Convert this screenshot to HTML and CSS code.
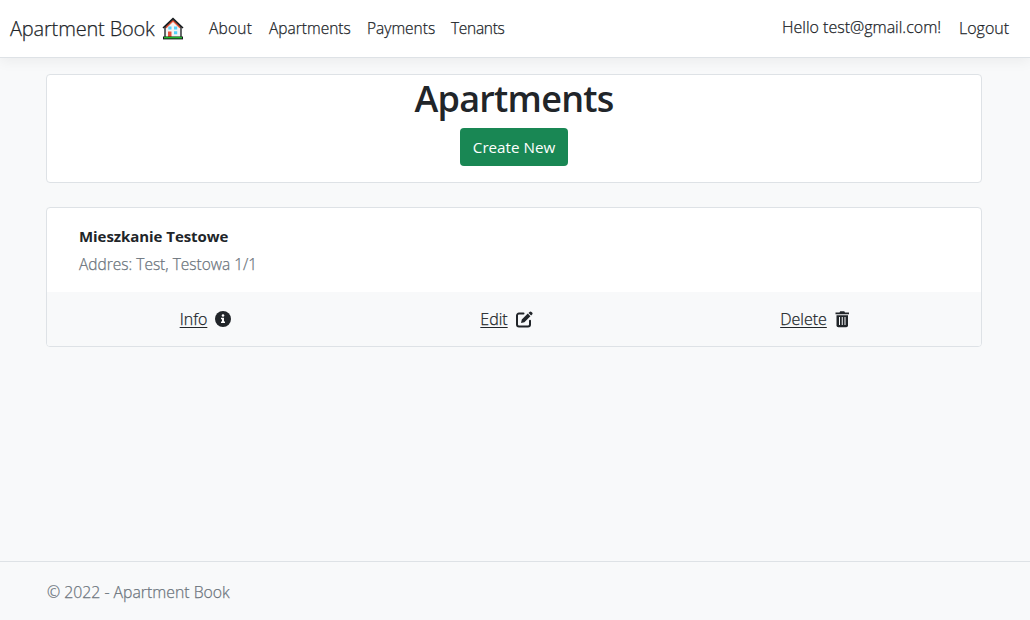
FILE: index.html
```html
<!DOCTYPE html>
<html lang="en">
<head>
<meta charset="utf-8">
<title>Apartments - Apartment Book</title>
<link rel="stylesheet" href="styles.css">
</head>
<body>
<header class="navbar">
  <a class="brand" href="#"><span class="brand-name">Apartment Book</span>
    <svg class="house" viewBox="0 0 22 23" width="22" height="23">
      <path d="M3 10.500 11 3 19 10.500V21H3Z" fill="#f3f3f3" stroke="#16191c" stroke-width="1.3"/>
      <path d="M4 10.800 11 4 18 10.800" fill="none" stroke="#f05a3c" stroke-width="1.3"/>
      <path d="M1 11 11 1.500 21 11" fill="none" stroke="#16191c" stroke-width="1.5"/>
      <path d="M6.300 9.500h3.200v3H6.300zM12 9.500h3.200v3H12zM12 14.300h3.200v3H12z" fill="#55d0f8"/>
      <path d="M6 14.500h3.500V20H6z" fill="#e9503b"/>
      <path d="M1 19.500h20v2.900H1z" fill="#16191c"/>
      <path d="M2 19.800h18v1.600H2z" fill="#20b82c"/>
    </svg>
  </a>
  <nav class="links">
    <a class="nav-link about" href="#">About</a>
    <a class="nav-link apartments" href="#">Apartments</a>
    <a class="nav-link payments" href="#">Payments</a>
    <a class="nav-link tenants" href="#">Tenants</a>
  </nav>
  <div class="account">
    <a class="hello" href="#">Hello test@gmail.com!</a>
    <a class="logout" href="#">Logout</a>
  </div>
</header>
<main class="container">
  <section class="card heading">
    <h1 class="title">Apartments</h1>
    <a class="btn" href="#">Create New</a>
  </section>
  <section class="card">
    <div class="card-body">
      <h2 class="name">Mieszkanie Testowe</h2>
      <p class="address">Addres: Test, Testowa 1/1</p>
    </div>
    <div class="actions">
      <div class="action"><a class="action-link info" href="#">Info</a>
        <svg width="16" height="16" viewBox="0 0 16 16"><circle cx="8" cy="8" r="8" fill="#212529"/><circle cx="8" cy="4.5" r="1.3" fill="#fff"/><path d="M6 6.800h3v3.800h1V12H6v-1.400h1V8.200H6z" fill="#fff"/></svg>
      </div>
      <div class="action"><a class="action-link edit" href="#">Edit</a>
        <svg width="17" height="17" viewBox="0 0 17 17"><path d="M7.500 2.500H3A2 2 0 0 0 1 4.500V13.500A2 2 0 0 0 3 15.500H12A2 2 0 0 0 14 13.500V9.800" fill="none" stroke="#212529" stroke-width="2" stroke-linecap="round"/><path d="M5 12l.8-3.400L11.800 2.600l2.600 2.600L8.400 11.200ZM12.500 1.900l1-1a1.400 1.400 0 0 1 2 0l.6.6a1.400 1.400 0 0 1 0 2l-1 1z" fill="#212529"/></svg>
      </div>
      <div class="action"><a class="action-link delete" href="#">Delete</a>
        <svg width="15" height="17" viewBox="0 0 15 17"><path d="M.5 1.500H4.500L5.200.3H9.300L10 1.500H14V3.300H.5Z" fill="#212529"/><path d="M1.500 4.300H13V14.500A1.800 1.800 0 0 1 11.200 16.300H3.300A1.800 1.800 0 0 1 1.500 14.500Z" fill="#212529"/><path d="M4.500 6V14M7.250 6V14M10 6V14" stroke="#f8f9fa" stroke-width="1"/></svg>
      </div>
    </div>
  </section>
</main>
<footer class="footer"><span class="copyright">© 2022 - Apartment Book</span></footer>
</body>
</html>
```
FILE: styles.css
```css
* { box-sizing: border-box; }
body {
  margin: 0;
  height: 620px;
  display: flex;
  flex-direction: column;
  overflow: hidden;
  background: #f8f9fa;
  color: #212529;
  font: 300 16px/24px "Segoe UI", "Open Sans", "Noto Sans", sans-serif;
  -webkit-text-stroke: .25px currentColor;
}
a { color: inherit; text-decoration: none; white-space: nowrap; }
.navbar {
  height: 58px;
  flex: none;
  display: flex;
  align-items: center;
  padding: 0 21px 0 10px;
  background: #fff;
  border-bottom: 1px solid #dee2e6;
  box-shadow: 0 4px 12px rgba(0, 0, 0, .05);
}
.brand { display: flex; align-items: center; width: 199px; font-size: 20px; line-height: 30px; }
.brand-name { width: 152px; flex: none; letter-spacing: -.17px; }
.house { flex: none; }
.links { display: flex; gap: 16px; font-size: 15.5px; margin-top: -2px; }
.about { width: 44px; letter-spacing: .25px; }
.apartments { width: 82px; }
.payments { width: 68px; }
.tenants { width: 54px; letter-spacing: -.3px; }
.account { margin-left: auto; margin-top: -1px; display: flex; }
.hello { width: 177px; margin-top: -1px; }
.logout { width: 50px; }
.container { flex: 1; padding: 16px 48px 0 46px; }
.card {
  border: 1px solid #dee2e6;
  border-radius: 4px;
  background: #fff;
  overflow: hidden;
}
.heading { height: 109px; margin-bottom: 24px; display: flex; flex-direction: column; align-items: center; }
.title { margin: 0 0 5px; font-size: 36px; line-height: 48px; font-weight: 600; letter-spacing: -.75px; -webkit-text-stroke: 0; }
.btn {
  height: 38px;
  width: 108px;
  border-radius: 4px;
  background: #198754;
  color: #fff;
  line-height: 38px;
  text-align: center;
  font-size: 15.2px;
  font-weight: 400;
  -webkit-text-stroke: 0;
}
.card-body { height: 84px; padding: 16px 32px 0; }
.name { margin: 0 0 4px; font-size: 15px; line-height: 24px; font-weight: 700; letter-spacing: -.06px; -webkit-text-stroke: 0; }
.address { margin: 0; color: #6c757d; font-size: 15.5px; }
.actions { height: 54px; display: grid; grid-template-columns: 317px 285px 1fr; background: #f8f9fa; }
.action { display: flex; align-items: center; justify-content: center; gap: 8px; }
.action-link { text-decoration: underline; text-underline-offset: 2px; }
.footer { height: 59px; flex: none; padding: 18px 47px; border-top: 1px solid #dee2e6; color: #6c757d; font-size: 15.8px; }
```
